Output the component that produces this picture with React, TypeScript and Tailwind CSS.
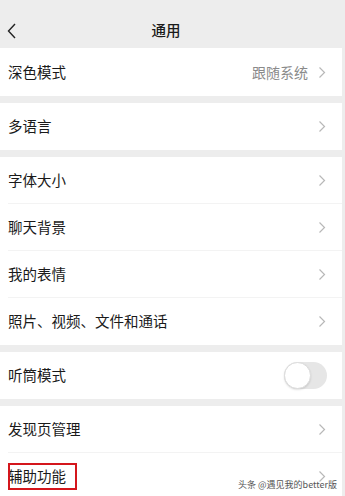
import React from "react";

const font = { fontFamily: '"Noto Sans CJK SC", "Noto Sans", sans-serif' };

const Chevron: React.FC = () => (
  <svg width="8" height="13" viewBox="0 0 8 13" fill="none" className="shrink-0">
    <path d="M1.5 1.5 L6.5 6.5 L1.5 11.5" stroke="#b8b8b8" strokeWidth="1.2" />
  </svg>
);

interface RowProps {
  label: string;
  value?: string;
  divider?: boolean;
  tall?: boolean;
  children?: React.ReactNode;
}

const Row: React.FC<RowProps> = ({ label, value, divider, tall, children }) => (
  <div className={`relative flex items-center pl-[8px] pr-[16px] bg-white ${tall ? "h-[48px]" : "h-[47px]"}`}>
    <span className="flex-1 text-[14.5px] text-[#1a1a1a] leading-none">{label}</span>
    {value && <span className="mr-[10px] text-[14px] text-[#8a8a8a] leading-none">{value}</span>}
    {children ?? <Chevron />}
    {divider && <div className="absolute left-[8px] right-0 bottom-0 h-px bg-[#f3f3f3]" />}
  </div>
);

const Toggle: React.FC = () => (
  <div className="relative w-[43px] h-[27px] rounded-full bg-[#e6e6e6] -mr-[1px]">
    <div className="absolute left-0 top-0 w-[27px] h-[27px] rounded-full bg-white border border-[#dcdcdc] shadow-[0_1px_2px_rgba(0,0,0,0.12)]" />
  </div>
);

export default function App() {
  return (
    <div className="w-[345px] h-[496px] overflow-hidden bg-[#ededed]" style={font}>
      <div className="w-[342px] flex flex-col">
        <header className="relative h-[48px] flex items-center justify-center pr-[10px]">
          <svg width="10" height="16" viewBox="0 0 10 16" fill="none" className="absolute left-[7px] top-[23px]">
            <path d="M8 1 L1.5 8 L8 15" stroke="#222" strokeWidth="1.4" />
          </svg>
          <span className="text-[14.5px] text-[#1a1a1a] font-medium mt-[11px]">通用</span>
        </header>

        <Row label="深色模式" value="跟随系统" tall />
        <div className="h-[7px]" />
        <Row label="多语言" />
        <div className="h-[7px]" />
        <Row label="字体大小" divider />
        <Row label="聊天背景" divider />
        <Row label="我的表情" divider />
        <Row label="照片、视频、文件和通话" />
        <div className="h-[7px]" />
        <Row label="听筒模式">
          <Toggle />
        </Row>
        <div className="h-[7px]" />
        <Row label="发现页管理" divider />
        <div className="relative">
          <Row label="辅助功能" />
          <div className="absolute left-[8px] top-[10px] w-[69px] h-[27px] border-2 border-[#d4161c]" />
          <span className="absolute right-[5px] top-[27px] text-[9px] leading-none text-[#555] [text-shadow:0_0_2px_#fff,0_0_2px_#fff]">
            头条 @遇见我的better版
          </span>
        </div>
      </div>
    </div>
  );
}
